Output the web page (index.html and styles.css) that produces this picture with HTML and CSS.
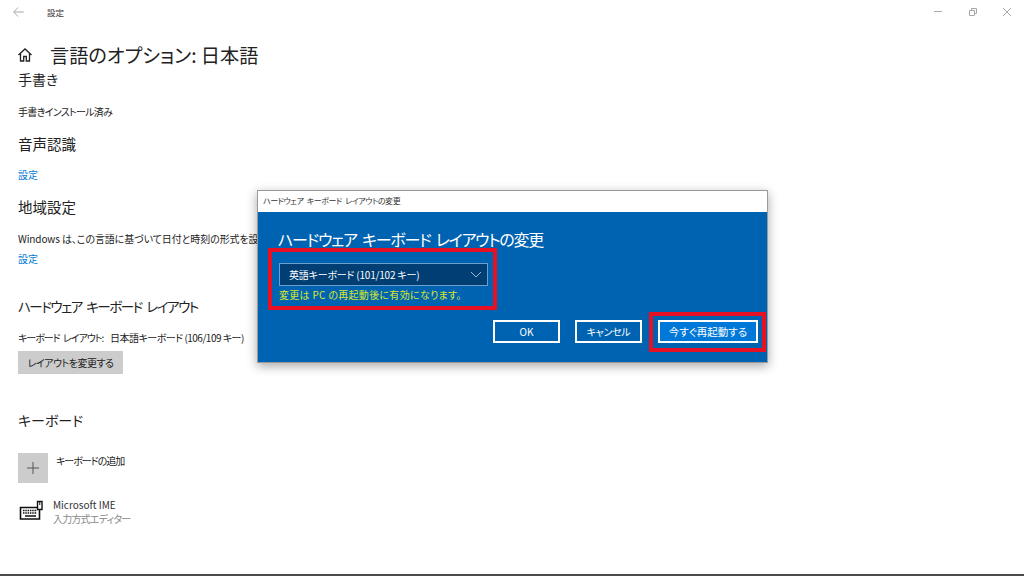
FILE: index.html
```html
<!DOCTYPE html>
<html lang="ja">
<head>
<meta charset="utf-8">
<title>設定</title>
<link rel="stylesheet" href="styles.css">
</head>
<body>
<div class="window">
  <header class="titlebar">
    <svg class="back" width="11" height="10" viewBox="0 0 11 10"><path d="M5 .5.7 5 5 9.500M.7 5h10" fill="none" stroke="#a8a8a8" stroke-width="1"/></svg>
    <span class="app-name">設定</span>
    <div class="controls">
      <svg width="8" height="8" viewBox="0 0 8 8"><path d="M0 3.500h8" stroke="#a8a8a8" fill="none"/></svg>
      <svg width="8" height="8" viewBox="0 0 8 8"><path d="M.5 2.500h5v5h-5zM2.500 2.500v-2h5v5h-2" stroke="#a8a8a8" fill="none"/></svg>
      <svg width="8" height="8" viewBox="0 0 8 8"><path d="M0 0l8 8M8 0l-8 8" stroke="#a8a8a8" fill="none"/></svg>
    </div>
  </header>
  <main class="content">
    <div class="page-title">
      <svg class="home" width="16" height="16" viewBox="0 0 16 16"><path d="M1.500 8 8 2l6.500 6M3.500 6.500V14h3.200V9.500h2.600V14h3.200V6.500" fill="none" stroke="#222" stroke-width="1.300"/></svg>
      <h1>言語のオプション: 日本語</h1>
    </div>
    <h2 class="first">手書き</h2>
    <p class="handwriting">手書きインストール済み</p>
    <h2 class="speech">音声認識</h2>
    <a class="link speech-link">設定</a>
    <h2 class="region">地域設定</h2>
    <p class="region-text">Windows は、この言語に基づいて日付と時刻の形式を設定します。</p>
    <a class="link region-link">設定</a>
    <h2 class="hardware">ハードウェア キーボード レイアウト</h2>
    <p class="layout-text"><span class="layout-label">キーボード レイアウト:</span>日本語キーボード (106/109 キー)</p>
    <button class="change-layout">レイアウトを変更する</button>
    <h2 class="keyboard">キーボード</h2>
    <div class="add-row">
      <span class="plus"><svg width="14" height="14" viewBox="0 0 14 14"><path d="M7 1v12M1 7h12" stroke="#555" fill="none"/></svg></span>
      <span class="add-label">キーボードの追加</span>
    </div>
    <div class="ime-row">
      <svg class="ime-icon" width="25" height="22" viewBox="0 0 25 22"><path d="M1.500 7.500h19v11.500h-19z" fill="none" stroke="#111" stroke-width="1.600"/><path d="M4 10.500h14M4 13h14" stroke="#111" stroke-width="1.600" stroke-dasharray="1.500 .8" fill="none"/><path d="M6 16h11" stroke="#111" stroke-width="1.500" fill="none"/><path d="M18.500 1.500h4.500v8h-4.500z" fill="#fff" stroke="#111" stroke-width="1.400"/><path d="M20.750 2v3" stroke="#111"/></svg>
      <div class="ime-text">
        <span class="ime-name">Microsoft IME</span>
        <span class="ime-sub">入力方式エディター</span>
      </div>
    </div>
  </main>
  <div class="taskbar-edge"></div>
</div>

<section class="dialog">
  <div class="dialog-title">ハードウェア キーボード レイアウトの変更</div>
  <div class="dialog-body">
    <h3>ハードウェア キーボード レイアウトの変更</h3>
    <div class="select">
      <span>英語キーボード (101/102 キー)</span>
      <svg width="12" height="7" viewBox="0 0 12 7"><path d="M1 1l5 5 5-5" fill="none" stroke="#9fb9d0"/></svg>
    </div>
    <p class="notice">変更は PC の再起動後に有効になります。</p>
    <div class="actions">
      <button class="dlg-btn">OK</button>
      <button class="dlg-btn cancel">キャンセル</button>
      <button class="dlg-btn primary">今すぐ再起動する</button>
    </div>
  </div>
  <div class="mark mark-select"></div>
  <div class="mark mark-restart"></div>
</section>
</body>
</html>
```
FILE: styles.css
```css
* { box-sizing: border-box; }
html, body { margin: 0; height: 100%; overflow: hidden; }
body {
  background: #fff;
  color: #222;
  font-family: "Noto Sans CJK JP", "Noto Sans", sans-serif;
  font-feature-settings: "palt";
  font-size: 10px;
  position: relative;
}
.window { height: 576px; display: flex; flex-direction: column; }
.titlebar { height: 24px; flex: none; display: flex; align-items: center; padding: 0 13px 0 13px; }
.back { flex: none; }
.app-name { margin-left: 23px; font-size: 8.500px; color: #333; }
.controls { margin-left: auto; display: flex; gap: 26.500px; align-items: center; }
.content { flex: 1; padding: 17px 0 0 18px; }
.page-title { display: flex; align-items: center; height: 28px; }
.home { margin-right: 17px; margin-left: -1px; }
h1 { margin: 0; font-size: 19.200px; font-weight: 400; line-height: 28px; color: #222; }
h2 { margin: 0; font-size: 14px; font-weight: 400; line-height: 20px; color: #222; white-space: nowrap; }
p { margin: 0; white-space: nowrap; }
.handwriting { margin-top: 15px; line-height: 16px; letter-spacing: -.7px; }
.speech { margin-top: 14px; font-size: 14.500px; }
.link { display: block; color: #0078d7; line-height: 16px; }
.speech-link { margin-top: 13px; }
.region { margin-top: 14px; font-size: 14.500px; }
.region-text { margin-top: 14px; line-height: 16px; letter-spacing: -.1px; }
.region-link { margin-top: 4px; }
.hardware { margin-top: 29px; font-size: 13.500px; letter-spacing: -1.500px; word-spacing: 3px; }
.layout-text { margin-top: 14px; line-height: 16px; letter-spacing: -.5px; display: flex; }
.layout-label { width: 92px; letter-spacing: -1px; word-spacing: 2px; }
.change-layout {
  display: block; width: 105px; height: 23px; margin-top: 5px; padding: 0;
  border: 0; background: #cccccc; color: #222;
  font: inherit; font-size: 10px; letter-spacing: -.5px;
}
.keyboard { margin-top: 36px; }
.add-row { display: flex; margin-top: 23px; align-items: flex-start; }
.plus { width: 30px; height: 30px; background: #cccccc; display: flex; align-items: center; justify-content: center; }
.add-label { margin-left: 8px; line-height: 16px; letter-spacing: -1px; }
.ime-row { display: flex; margin-top: 15px; align-items: center; }
.ime-icon { flex: none; margin-right: 10px; margin-left: 1px; margin-top: -3px; }
.ime-text { display: flex; flex-direction: column; margin-left: -1px; line-height: 14px; }
.ime-name { color: #333; }
.ime-sub { color: #888; letter-spacing: -.8px; }
.taskbar-edge { height: 2px; flex: none; background: #4a4a4a; }

.dialog {
  position: absolute; left: 257px; top: 190px; width: 511px; height: 173px;
  display: flex; flex-direction: column;
  border: 1px solid #9a9a9a; background: #0063b1;
  box-shadow: 0 3px 10px rgba(0,0,0,.35);
}
.dialog-title {
  height: 21px; flex: none; background: #fff; color: #333;
  font-size: 8px; line-height: 20px; padding-left: 5px; letter-spacing: -.45px; word-spacing: 2px;
}
.dialog-body { flex: 1; padding: 15px 9px 0 20px; color: #fff; display: flex; flex-direction: column; }
h3 { margin: 0; font-size: 16px; font-weight: 400; line-height: 24px; white-space: nowrap; letter-spacing: -1.250px; word-spacing: 3px; }
.select {
  width: 209px; height: 23px; margin-top: 12px; margin-left: 1px; padding: 0 5px 0 9px;
  display: flex; align-items: center; justify-content: space-between;
  background: #003e73; border: 1px solid #6f9fcb;
  font-size: 10px; color: #fff; letter-spacing: -.2px;
}
.notice { color: #d9e628; font-size: 10px; line-height: 14px; margin-top: 2px; margin-left: 1px; letter-spacing: .3px; }
.actions { display: flex; justify-content: flex-end; gap: 15px; margin-top: 18px; }
.dlg-btn {
  width: 67px; height: 23px; padding: 0;
  background: transparent; border: 2px solid #fff; color: #fff;
  font: inherit; font-size: 10px;
}
.cancel { letter-spacing: -.3px; margin-right: 1px; }
.dlg-btn.primary { width: 100px; background: #0078d7; font-size: 10.500px; }
.mark { position: absolute; border: 4px solid #e81123; }
.mark-select { left: 10px; top: 57px; width: 229px; height: 62px; }
.mark-restart { left: 391px; top: 121px; width: 117px; height: 40px; }
```
